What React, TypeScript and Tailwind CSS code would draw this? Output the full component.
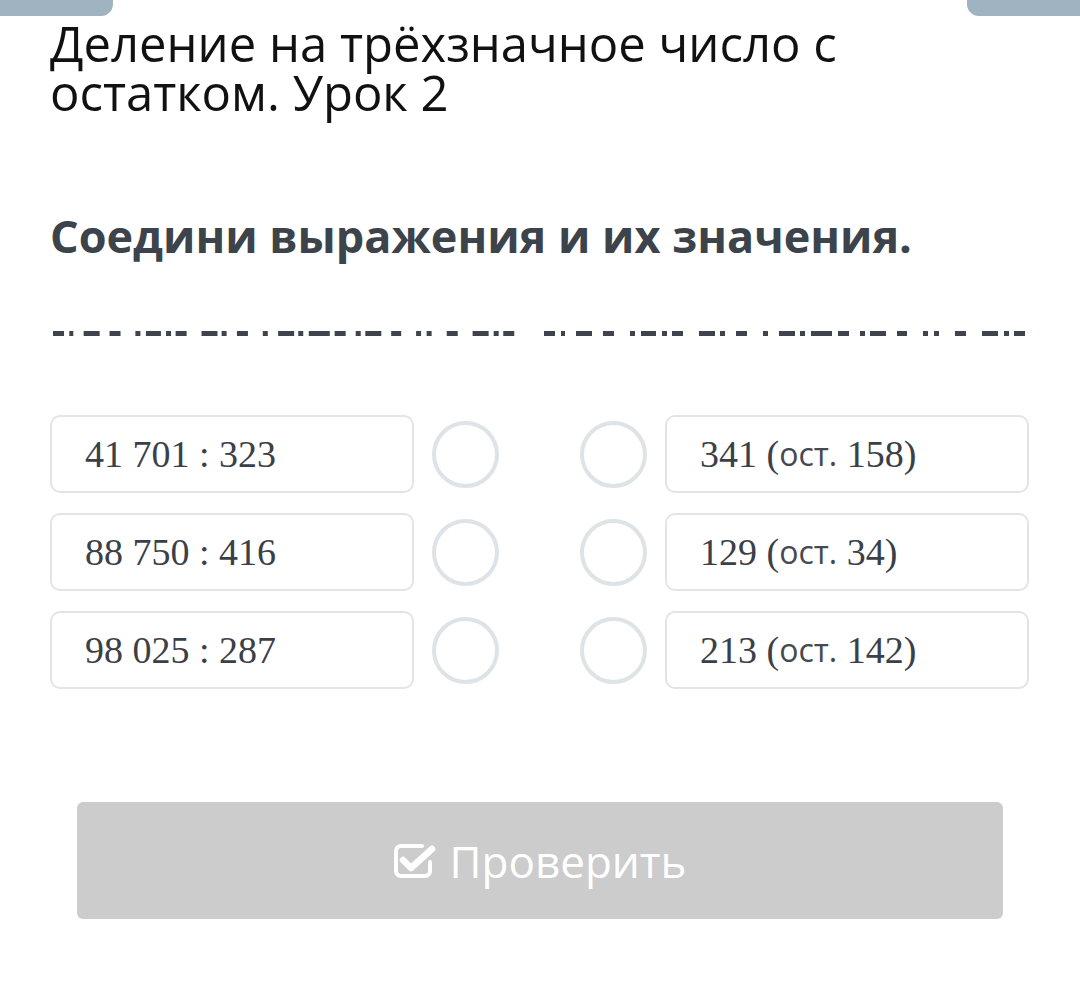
const dashes: [number, number][] = [
  [0, 11], [17, 4], [32, 16], [59, 11], [86, 5], [97, 15], [118, 5], [128, 11],
  [155, 16], [176, 5], [192, 11], [219, 5], [235, 16], [256, 5], [267, 21],
  [294, 11], [316, 5], [326, 16], [353, 10], [379, 5], [390, 5], [411, 11],
  [438, 16], [460, 5], [470, 11],
];

const rows = [
  { left: "41 701 : 323", num: "341", rest: "158)" },
  { left: "88 750 : 416", num: "129", rest: "34)" },
  { left: "98 025 : 287", num: "213", rest: "142)" },
];

function DashLine() {
  return (
    <svg width="980" height="6" viewBox="0 0 980 6" className="block">
      {dashes.map(([x, w]) => (
        <rect key={"a" + x} x={3 + x * 0.958} y="0" width={w} height="5" fill="#3f444c" />
      ))}
      {dashes.map(([x, w]) => (
        <rect key={"b" + x} x={494 + x} y="0" width={w} height="5" fill="#3f444c" />
      ))}
    </svg>
  );
}

function Dot() {
  return <div className="h-[67px] w-[67px] shrink-0 rounded-full border-[4px] border-[#dee3e7]" />;
}

function Card({ children }: { children: React.ReactNode }) {
  return (
    <div className="flex h-[78px] w-[364px] shrink-0 items-center rounded-[10px] border-2 border-[#e3e4e6] pl-[33px] font-['Liberation_Serif',serif] text-[38px] text-[#3b4048]">
      {children}
    </div>
  );
}

function CheckSquare() {
  return (
    <svg width="42" height="36" viewBox="0 0 42 36" fill="none" className="shrink-0">
      <path
        d="M36 19v9a5 5 0 0 1-5 5H7a5 5 0 0 1-5-5V8a5 5 0 0 1 5-5h21"
        stroke="white"
        strokeWidth="4"
        strokeLinecap="round"
      />
      <path d="M9 17l8 8L38 6" stroke="white" strokeWidth="6.5" strokeLinecap="round" strokeLinejoin="round" />
    </svg>
  );
}

export default function App() {
  return (
    <div className="min-h-[992px] bg-white font-['Open_Sans',sans-serif]">
      <div className="flex h-[16px] justify-between">
        <div className="w-[113px] rounded-br-[12px] bg-[#9fb3c0]" />
        <div className="w-[113px] rounded-bl-[12px] bg-[#9fb3c0]" />
      </div>
      <div className="px-[50px]">
        <h1 className="mt-[3px] max-w-[900px] text-[49px] leading-[49px] text-[#111111]">
          Деление на трёхзначное число с остатком. Урок 2
        </h1>
        <h2 className="mt-[90px] text-[45px] font-bold leading-[58px] text-[#3d434b]">
          Соедини выражения и их значения.
        </h2>
        <div className="mt-[66px]">
          <DashLine />
        </div>
        <div className="mt-[78px] flex flex-col gap-[20px]">
          {rows.map((r) => (
            <div key={r.left} className="flex items-center">
              <Card>{r.left}</Card>
              <div className="ml-[18px]">
                <Dot />
              </div>
              <div className="ml-[81px]">
                <Dot />
              </div>
              <div className="ml-[18px]">
                <Card>
                  {r.num}&nbsp;(
                  <span className="font-['Open_Sans',sans-serif] text-[32px] text-[#454a52]">ост.</span>
                  &nbsp;{r.rest}
                </Card>
              </div>
            </div>
          ))}
        </div>
        <button className="mx-[27px] mt-[113px] flex h-[117px] w-[926px] items-center justify-center gap-[14px] rounded-[6px] bg-[#cccccc] text-[44px] text-white">
          <CheckSquare />
          <span>Проверить</span>
        </button>
      </div>
    </div>
  );
}
